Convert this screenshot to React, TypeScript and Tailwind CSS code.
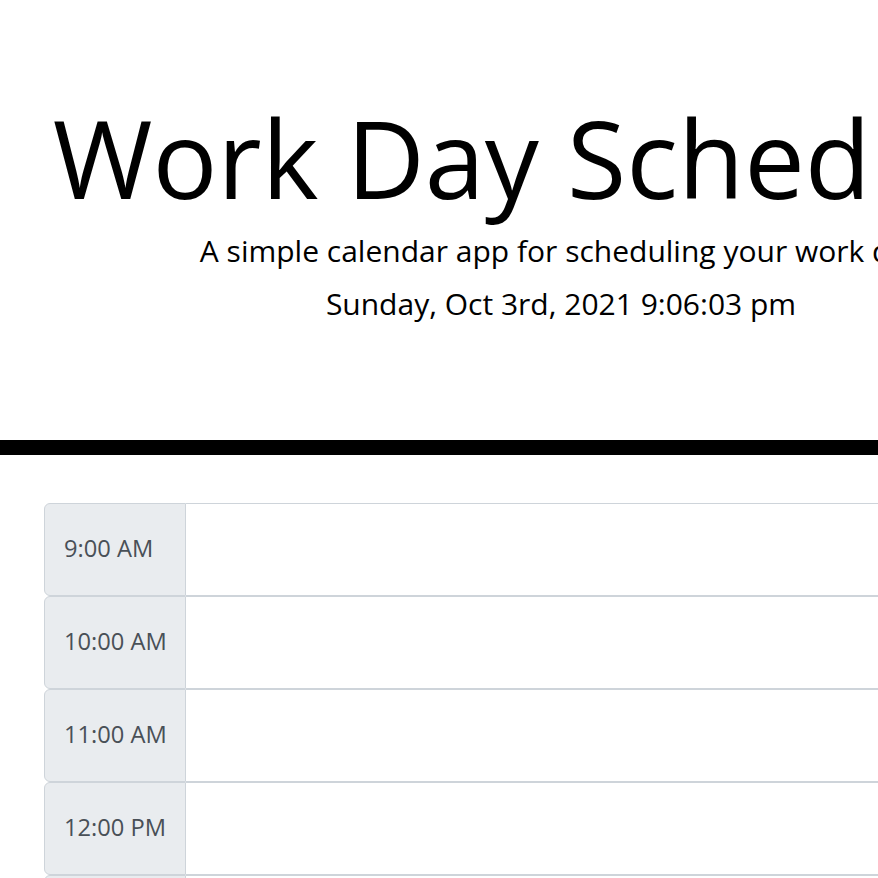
import React from "react";

const hours = ["9:00 AM", "10:00 AM", "11:00 AM", "12:00 PM", "1:00 PM", "2:00 PM", "3:00 PM", "4:00 PM", "5:00 PM"];

export default function App() {
  return (
    <div className="w-[878px] h-[878px] overflow-hidden bg-white" style={{ fontFamily: '"Open Sans", "Noto Sans", sans-serif' }}>
      <div className="w-[1122px]">
        <header className="text-center text-black pt-[93px] pb-[114px] border-b-[15px] border-black">
          <h1 className="text-[108px] leading-[1.2] font-normal">Work Day Scheduler</h1>
          <p className="text-[30px] leading-[1.5] mt-[5px]">A simple calendar app for scheduling your work day</p>
          <p className="text-[30px] leading-[1.5] mt-[8px]">Sunday, Oct 3rd, 2021 9:06:03 pm</p>
        </header>
        <div className="pt-[48px] pl-[44px] pr-[44px]">
          {hours.map((h) => (
            <div key={h} className="flex h-[93px]">
              <div className="w-[142px] shrink-0 flex items-center pl-[19px] bg-[#e9ecef] border border-[#ced4da] rounded-l-[6px] text-[#495057] text-[23.7px]">
                {h}
              </div>
              <div className="flex-1 bg-white border-y border-[#ced4da]" />
            </div>
          ))}
        </div>
      </div>
    </div>
  );
}
